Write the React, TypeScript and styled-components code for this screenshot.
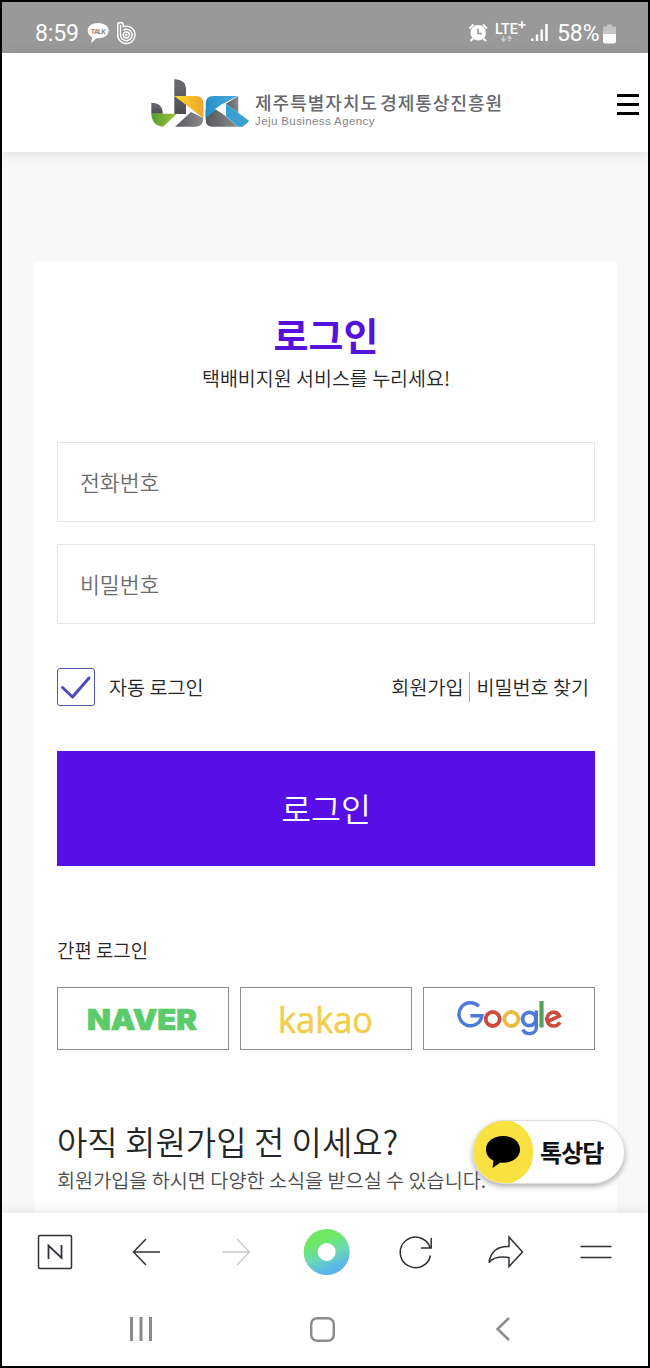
import React from "react";
import styled, { createGlobalStyle } from "styled-components";

const Global = createGlobalStyle`
  * { box-sizing: border-box; }
  body { margin: 0; background: #000; font-family: "Noto Sans CJK KR", sans-serif; font-weight: 350; color: #262626; }
  button, input { font-family: inherit; font-weight: inherit; }
  svg { display: block; flex: none; overflow: visible; }
`;

const Phone = styled.div`
  width: 650px;
  height: 1368px;
  border: 2px solid #000;
  background: #fff;
  display: flex;
  flex-direction: column;
  overflow: hidden;
`;

const StatusBar = styled.div`
  height: 51px;
  flex: none;
  background: #999;
  color: #fff;
  display: flex;
  align-items: center;
  padding: 12px 32px 0 33px;
  font-family: Roboto, sans-serif;
  font-weight: 400;
  font-size: 23px;
  line-height: 26px;
`;
const Clock = styled.span`
  width: 51px;
  letter-spacing: -0.15px;
`;
const Battery = styled.span`
  margin-left: 9px;
  width: 46px;
  letter-spacing: -0.1px;
`;
const Spacer = styled.div`
  flex: 1;
`;

const Header = styled.header`
  height: 99px;
  flex: none;
  display: flex;
  align-items: center;
  justify-content: space-between;
  padding: 0 9px 0 148px;
  background: #fff;
  box-shadow: 0 2px 12px rgba(0, 0, 0, 0.1);
  position: relative;
`;
const Brand = styled.div`
  display: flex;
  gap: 5px;
`;
const BrandText = styled.div`
  display: flex;
  flex-direction: column;
  padding-top: 13px;
`;
const BrandName = styled.span`
  font-size: 18px;
  line-height: 23px;
  font-weight: 500;
  letter-spacing: 1.02px;
  word-spacing: -3px;
  color: #66676a;
  white-space: nowrap;
`;
const BrandSub = styled.span`
  font-family: "Liberation Sans", sans-serif;
  font-weight: 400;
  font-size: 11.5px;
  line-height: 14px;
  letter-spacing: 0.4px;
  color: #858585;
  white-space: nowrap;
`;
const MenuButton = styled.button`
  border: 0;
  background: none;
  padding: 4px 0 0;
`;

const Main = styled.main`
  flex: 1;
  min-height: 0;
  overflow: hidden;
  background: #f8f8f8;
  padding: 110px 31px 0 32px;
`;
const Card = styled.section`
  background: #fefefe;
  height: 1000px;
  padding: 52px 22px 0 23px;
`;
const Title = styled.h1`
  margin: 0;
  font-size: 38px;
  line-height: 40px;
  font-weight: 700;
  text-align: center;
  color: #5512dc;
`;
const Lead = styled.p`
  margin: 10px 0 50px;
  font-size: 19.5px;
  line-height: 28px;
  text-align: center;
`;
const Field = styled.input`
  display: block;
  width: 100%;
  height: 80px;
  margin-bottom: 22px;
  padding: 0 22px 2px 22px;
  border: 1px solid #e6e6e6;
  background: #fff;
  font-size: 21.6px;
  &::placeholder { color: #6c6c6c; }
`;
const Options = styled.div`
  display: flex;
  align-items: center;
  height: 38px;
  margin-top: 44px;
  font-size: 19.6px;
  line-height: 30px;
`;
const CheckBox = styled.span`
  width: 38px;
  height: 38px;
  border: 1px solid #5656a8;
  border-radius: 3px;
  margin-right: 14px;
`;
const Link = styled.a<{ $divided?: boolean }>`
  padding: 0 6px;
  border-left: ${(p) => (p.$divided ? "1px solid #aaa" : "0")};
`;
const Submit = styled.button`
  display: block;
  width: 100%;
  height: 115px;
  margin-top: 45px;
  border: 0;
  padding: 0 0 3px;
  background: #580fe6;
  color: #fff;
  font-size: 32.5px;
`;
const SocialLabel = styled.p`
  margin: 70px 0 23px;
  font-size: 18.9px;
  line-height: 28px;
`;
const Socials = styled.div`
  display: grid;
  grid-template-columns: repeat(3, 1fr);
  gap: 11px;
`;
const Social = styled.button`
  height: 63px;
  border: 1px solid #8f8f8f;
  background: #fff;
  padding: 0;
  display: flex;
  align-items: center;
  justify-content: center;
`;
const JoinTitle = styled.h2`
  margin: 67px 0 0;
  font-size: 33px;
  line-height: 48px;
  font-weight: inherit;
`;
const JoinText = styled.p`
  margin: 1px 0 0;
  font-size: 19.65px;
  line-height: 28px;
  color: #4c4c4c;
  white-space: nowrap;
`;

const TalkButton = styled.button`
  position: absolute;
  left: 472px;
  top: 1120px;
  width: 153px;
  height: 64px;
  border: 1px solid #ddd;
  border-radius: 32px;
  background: #fff;
  box-shadow: 0 3px 5px rgba(0, 0, 0, 0.28);
  padding: 0;
  display: flex;
  align-items: center;
  overflow: hidden;
  color: #111;
  font-size: 24px;
  line-height: 36px;
  font-weight: 700;
  letter-spacing: -0.9px;
`;
const TalkLabel = styled.span`
  padding-bottom: 1px;
`;
const TalkIcon = styled.span`
  width: 60px;
  height: 64px;
  flex: none;
  margin-right: 7px;
  border-radius: 30px;
  background: #f9e142;
  display: flex;
  align-items: center;
  justify-content: center;
`;

const Toolbar = styled.nav`
  height: 78px;
  flex: none;
  display: grid;
  grid-template-columns: repeat(7, 90.2px);
  justify-content: center;
  align-items: center;
  justify-items: center;
  padding-left: 2px;
  background: #fff;
  box-shadow: 0 -1px 10px rgba(60, 60, 80, 0.12);
  position: relative;
`;
const SystemNav = styled.nav`
  height: 75px;
  flex: none;
  display: grid;
  grid-template-columns: repeat(3, 180.7px);
  padding: 1px 0 0 49px;
  align-items: center;
  justify-items: center;
  background: #fff;
  position: relative;
`;

const StatusLeftIcons = () => (
  <svg width="52" height="26" viewBox="86 21 52 26">
    <path d="M98 23c-6 0-10.300 3.200-10.300 7.600 0 3 1.700 5.300 4.300 6.600l-.8 5.800 5.200-4.800c7.300.6 12.300-2.800 12.300-7.600C108.700 26 104 23 98 23Z" fill="#fff" />
    <text x="98.200" y="34" textAnchor="middle" textLength="15" fontSize="7" fontWeight="700" fontFamily="Roboto, sans-serif" fill="#888">TALK</text>
    <g fill="none" stroke="#fff" strokeWidth="1.400">
      <path d="M117.700 35V24.700c0-3 5.600-3 5.600 0v2A8.700 8.700 0 1 1 117.700 35Z" />
      <path d="M120.500 25v10a5.800 5.800 0 1 0 5.800-5.800c-1.200 0-2.200.3-3 .8" />
      <circle cx="126.300" cy="35" r="3" />
      <circle cx="126.300" cy="35" r=".6" />
    </g>
  </svg>
);

const StatusRightIcons = () => (
  <svg width="80" height="26" viewBox="468 21 80 26">
    <circle cx="478.200" cy="32.800" r="7.700" fill="#fff" />
    <path d="M469.500 28.500l4-4M487 28.500l-4-4M473 38.500l-2.500 2.500M483.500 38.500l2.500 2.500" stroke="#fff" strokeWidth="2" />
    <path d="M478 28.500v5h4" fill="none" stroke="#999" strokeWidth="1.600" />
    <text x="495" y="34.300" textLength="23" lengthAdjust="spacingAndGlyphs" fontSize="14.500" fontWeight="500" fontFamily="Roboto, sans-serif" fill="#fff">LTE</text>
    <path d="M518.500 24.800h7M522 21.300v7" stroke="#fff" strokeWidth="1.800" />
    <path d="M503.500 36v5M501.300 38.800l2.200 2.400 2.200-2.400M509.500 41.500v-5M507.300 38.700l2.200-2.400 2.200 2.400" fill="none" stroke="#ccc" strokeWidth="1.500" />
    <path d="M532.300 41v-2.500M537 41v-6.500M541.700 41V29.500M546.500 41V24" stroke="#fff" strokeWidth="2.400" />
  </svg>
);

const BatteryIcon = () => (
  <svg width="13" height="20" viewBox="0 0 13 20">
    <path d="M1 2.500h3V.5h5v2h3q1 0 1 1V10H0V3.500q0-1 1-1Z" fill="#c4c4c4" />
    <path d="M0 10h13v7.500q0 2-2 2H2q-2 0-2-2Z" fill="#fff" />
  </svg>
);

const BrandMark = () => (
  <svg width="100" height="50" viewBox="150 77 100 50">
    <defs>
      <linearGradient id="slate" x1="0" y1="0" x2="0" y2="1"><stop stopColor="#6b6c70" /><stop offset="1" stopColor="#4c4d51" /></linearGradient>
      <linearGradient id="ash"><stop stopColor="#57585b" /><stop offset="1" stopColor="#8b8c8e" /></linearGradient>
      <linearGradient id="leaf"><stop stopColor="#579c32" /><stop offset="1" stopColor="#a0c63c" /></linearGradient>
      <linearGradient id="sun"><stop stopColor="#fddb2c" /><stop offset="1" stopColor="#f2a32b" /></linearGradient>
      <linearGradient id="sea"><stop stopColor="#2590c5" /><stop offset="1" stopColor="#51afdc" /></linearGradient>
    </defs>
    <path d="M174.300 78q11.700 1 11.700 9v26h-11.700Z" fill="url(#slate)" />
    <path d="M151.300 101.700q11.400 0 11.400 11H151.300Z" fill="url(#slate)" />
    <path d="M151.300 112.700H177l-14 13q-11-1-11.700-13Z" fill="url(#leaf)" />
    <path d="M175 125.700 191 111l12.300 6q0 8.700-8.300 8.700Z" fill="url(#ash)" />
    <path d="M174.300 95H196q7.300 0 7.300 8v14Z" fill="url(#sun)" />
    <path d="M205.700 109v9.500q0 7.200 6.500 7.200H238L215 106Z" fill="url(#ash)" />
    <path d="M205.700 117v-14q0-8 7.500-8h24.500l-15 8-17 14Z" fill="url(#sea)" />
    <path d="M221.500 103.500 226 102v13l-11-7Z" fill="#fff" />
    <path d="M226 102.700 238.300 95v17Z" fill="url(#ash)" />
    <path d="M226 102.700 249.300 120l-6.600 5.700H238l-12-10.700Z" fill="#399fd1" />
  </svg>
);

const Google = () => (
  <svg width="106" height="38" viewBox="456 1000 106 38" fill="none" strokeWidth="3.800">
    <path d="M478.800 1006.300a11.500 11.500 0 1 0 3.100 9.500h-11.500" stroke="#4c7bd9" strokeWidth="3.400" />
    <circle cx="492.700" cy="1019" r="7" stroke="#cb493d" />
    <circle cx="511.400" cy="1019" r="7" stroke="#eabb42" />
    <circle cx="529.300" cy="1019" r="6.700" stroke="#4c7bd9" />
    <path d="M536.300 1010.500v17c0 7.500-11 8-13.500 2" stroke="#4c7bd9" strokeWidth="3.400" />
    <path d="M541.500 1001v26.500" stroke="#57a05b" strokeWidth="4.200" />
    <path d="M547.500 1021.500l12-5.500c-2-4-7-5-10.300-2-5 5-1 12 4.300 12 3 0 5-1.300 6.500-3.500" stroke="#cb493d" strokeWidth="3.600" />
  </svg>
);

const Naver = () => (
  <svg width="110" height="30">
    <text x="-1" y="25.500" textLength="110" lengthAdjust="spacingAndGlyphs" fontFamily="Inter, sans-serif" fontSize="28.500" fontWeight="900" fill="#5bcb6b" stroke="#5bcb6b" strokeWidth=".7">NAVER</text>
  </svg>
);
const Kakao = () => (
  <svg width="96" height="38">
    <text x="0" y="33" textLength="95" lengthAdjust="spacingAndGlyphs" fontFamily='"Open Sans", sans-serif' fontSize="36" fontWeight="400" fill="#efcf4b" stroke="#efcf4b" strokeWidth=".6">kakao</text>
  </svg>
);

export default function App() {
  return (
    <Phone>
      <Global />
      <StatusBar>
        <Clock>8:59</Clock>
        <StatusLeftIcons />
        <Spacer />
        <StatusRightIcons />
        <Battery>58%</Battery>
        <BatteryIcon />
      </StatusBar>
      <Header>
        <Brand>
          <BrandMark />
          <BrandText>
            <BrandName>제주특별자치도 경제통상진흥원</BrandName>
            <BrandSub>Jeju Business Agency</BrandSub>
          </BrandText>
        </Brand>
        <MenuButton aria-label="메뉴">
          <svg width="22" height="21"><path d="M0 1.500h22M0 10.500h22M0 19.500h22" stroke="#000" strokeWidth="3" /></svg>
        </MenuButton>
      </Header>
      <Main>
        <Card>
          <Title>로그인</Title>
          <Lead>택배비지원 서비스를 누리세요!</Lead>
          <Field placeholder="전화번호" />
          <Field placeholder="비밀번호" />
          <Options>
            <CheckBox>
              <svg width="36" height="36"><path d="M4.500 18.500 14.500 28 31 9" fill="none" stroke="#4b4bb9" strokeWidth="3" strokeLinecap="round" strokeLinejoin="round" /></svg>
            </CheckBox>
            자동 로그인
            <Spacer />
            <Link>회원가입</Link>
            <Link $divided>비밀번호 찾기</Link>
          </Options>
          <Submit>로그인</Submit>
          <SocialLabel>간편 로그인</SocialLabel>
          <Socials>
            <Social><Naver /></Social>
            <Social><Kakao /></Social>
            <Social aria-label="Google"><Google /></Social>
          </Socials>
          <JoinTitle>아직 회원가입 전 이세요?</JoinTitle>
          <JoinText>회원가입을 하시면 다양한 소식을 받으실 수 있습니다.</JoinText>
        </Card>
      </Main>
      <Toolbar>
        <svg width="36" height="36" fill="none" stroke="#303038" strokeWidth="1.500"><rect x="1.500" y="1.500" width="33" height="33" rx="1.500" /><path d="M11.500 25V11.500L24.500 24V11" strokeWidth="1.800" /></svg>
        <svg width="28" height="28" fill="none" stroke="#303038" strokeWidth="1.500"><path d="M28 14H1.500M14 1 1.500 14l12.500 13" /></svg>
        <svg width="28" height="28" fill="none" stroke="#c8c8c8" strokeWidth="1.300"><path d="M.5 14h27M15 1 27.500 14 15 27" /></svg>
        <svg width="46" height="46">
          <defs><linearGradient id="ring" x1=".3" y1="0" x2=".7" y2="1"><stop offset=".15" stopColor="#70e866" /><stop offset=".6" stopColor="#68d9b6" /><stop offset="1" stopColor="#5cb6e9" /></linearGradient></defs>
          <circle cx="23.700" cy="23" r="16" fill="none" stroke="url(#ring)" strokeWidth="14" />
        </svg>
        <svg width="32" height="32" fill="none" stroke="#303038" strokeWidth="1.500"><path d="M30.500 19.500A15.300 15.300 0 1 1 30 11.500M31.200 2v10H21" /></svg>
        <svg width="36" height="32" fill="none" stroke="#303038" strokeWidth="1.500"><path d="M21 1 34.500 16 21 30.500V21.500C9.500 20 4.500 22 1 26.500 2.500 17 8.500 10 21 10.500Z" /></svg>
        <svg width="32" height="14" stroke="#303038" strokeWidth="1.500"><path d="M-.5 1.500h31M-.5 12.500h31" /></svg>
      </Toolbar>
      <SystemNav>
        <svg width="24" height="24" stroke="#8b8b8b" strokeWidth="3"><path d="M2.500 0v24M12 0v24M21.500 0v24" /></svg>
        <svg width="25" height="25"><rect x="1.200" y="1.200" width="22.600" height="22.600" rx="6" fill="none" stroke="#8b8b8b" strokeWidth="2.500" /></svg>
        <svg width="14" height="24" fill="none" stroke="#8b8b8b" strokeWidth="2.500"><path d="M13 1 1.500 12 13 23" /></svg>
      </SystemNav>
      <TalkButton>
        <TalkIcon>
          <svg width="34" height="34" viewBox="0 0 34 34"><path d="M17 1C7.500 1 0 6.500 0 14.500c0 5 3 9 7.500 11.200L6.500 33l8-5.500C25 29 34 23 34 14.500 34 6.500 26.500 1 17 1Z" fill="#000" /></svg>
        </TalkIcon>
        <TalkLabel>톡상담</TalkLabel>
      </TalkButton>
    </Phone>
  );
}
